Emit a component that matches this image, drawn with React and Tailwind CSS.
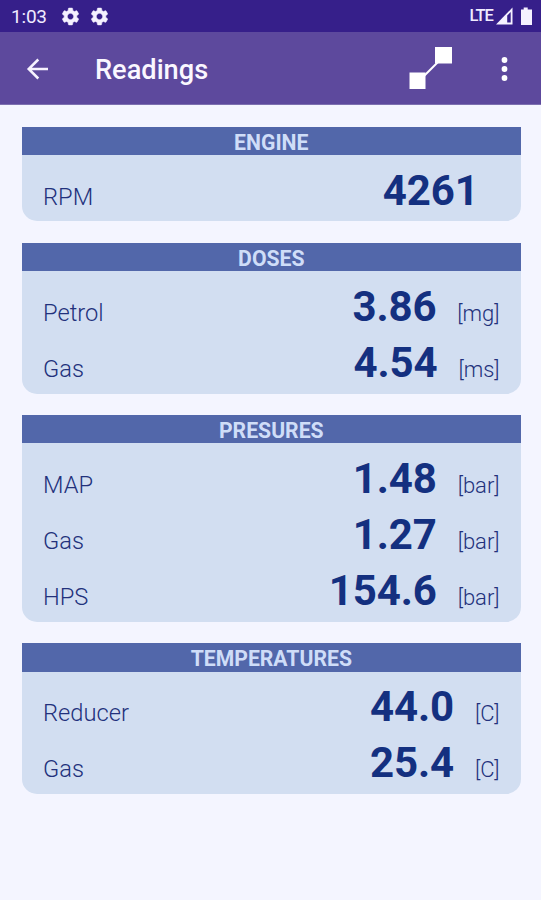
import React from "react";

const groups = [
  { title: "ENGINE", rows: [["RPM", "4261", ""]] },
  { title: "DOSES", rows: [["Petrol", "3.86", "[mg]"], ["Gas", "4.54", "[ms]"]] },
  { title: "PRESURES", rows: [["MAP", "1.48", "[bar]"], ["Gas", "1.27", "[bar]"], ["HPS", "154.6", "[bar]"]] },
  { title: "TEMPERATURES", rows: [["Reducer", "44.0", "[C]"], ["Gas", "25.4", "[C]"]] },
];

function Gear() {
  return (
    <svg className="size-[21px]" viewBox="0 0 24 24" fill="#f5f1ff" stroke="#f5f1ff" strokeWidth=".6">
      <path d="M19.14 12.94c.04-.3.06-.61.06-.94 0-.32-.02-.64-.07-.94l2.03-1.58a.49.49 0 0 0 .12-.61l-1.92-3.32a.488.488 0 0 0-.59-.22l-2.39.96c-.5-.38-1.03-.7-1.62-.94l-.36-2.54a.484.484 0 0 0-.48-.41h-3.84c-.24 0-.43.17-.47.41l-.36 2.54c-.59.24-1.13.57-1.62.94l-2.39-.96c-.22-.08-.47 0-.59.22L2.74 8.87c-.12.21-.08.47.12.61l2.03 1.58c-.05.3-.09.63-.09.94s.02.64.07.94l-2.03 1.58a.49.49 0 0 0-.12.61l1.92 3.32c.12.22.37.29.59.22l2.39-.96c.5.38 1.03.7 1.62.94l.36 2.54c.05.24.24.41.48.41h3.84c.24 0 .44-.17.47-.41l.36-2.54c.59-.24 1.13-.56 1.62-.94l2.39.96c.22.08.47 0 .59-.22l1.92-3.32c.12-.22.07-.47-.12-.61l-2.01-1.58zM12 15.6c-1.98 0-3.6-1.62-3.6-3.6s1.62-3.6 3.6-3.6 3.6 1.62 3.6 3.6-1.62 3.6-3.6 3.6z" />
    </svg>
  );
}

function Card({ title, rows }) {
  return (
    <section className="overflow-hidden rounded-b-[15px] bg-[#d2def1] pb-[9.8px]">
      <h2 className="h-[28.4px] bg-[#5267aa] text-center text-[21.2px] font-bold leading-[31px] text-[#cfddf8]">{title}</h2>
      {rows.map(([label, value, unit]) => (
        <div key={label} className="flex h-[56.3px] items-baseline px-[21px] pt-[10.5px] text-[#22317c]">
          <span className="flex-1 text-[23.7px] font-light leading-[27px]">{label}</span>
          <span className="mr-[21px] text-[42px] font-bold leading-[49px] tracking-[-0.15px] text-[#143080]">{value}</span>
          <span className="text-[22px] font-light leading-[27px]">{unit}</span>
        </div>
      ))}
    </section>
  );
}

export default function App() {
  return (
    <div className="flex h-[900px] w-full flex-col overflow-hidden bg-[#f4f5ff] font-['Roboto',sans-serif]">
      <div className="flex h-8 items-center bg-[#361f8a] pl-[11px] pr-[8px] text-[#f0ebff]">
        <span className="w-[49px] text-[19px] leading-8 tracking-[-0.2px] pt-[2px]">1:03</span>
        <span className="flex gap-[8px]"><Gear /><Gear /></span>
        <span className="ml-auto text-[16.5px] font-medium leading-8 tracking-[-0.9px]">LTE</span>
        <svg className="ml-[2px] h-[20px] w-[38px]" viewBox="0 0 38 20">
          <path d="M17.5 1.5v17H1z" fill="#f5f1ff" />
          <path d="M12.2 9.5 15.7 6v10.5h-3.5z" fill="#361f8a" />
          <path d="M28.7 1.5h4v2h4.3V19H26V3.500h2.700z" fill="#f5f1ff" />
        </svg>
      </div>
      <header className="flex h-[73px] items-center border-b border-[#7d70b0] bg-[#5d499d]">
        <svg className="ml-[26px] mt-[1px] h-[22px] w-[24px]" viewBox="0 0 24 22" fill="none" stroke="#f7f3ff" strokeWidth="2.5">
          <path d="M22 11H3M12.3 1.5 2.7 11l9.6 9.5" />
        </svg>
        <h1 className="ml-[45px] pt-[3px] text-[27.2px] font-medium leading-8 text-[#faf7ff]">Readings</h1>
        <svg className="ml-auto mt-[1px] h-[43px] w-[44px]" viewBox="0 0 44 43">
          <path d="M9 35 35 9" stroke="#fff" strokeWidth="2" />
          <path d="M.5 25.500h16v16.500H.5zM26 0h17v16.500H26z" fill="#fff" />
        </svg>
        <svg className="ml-[48px] mr-[33px] mt-[1px] h-[24px] w-[7px]" viewBox="0 0 7 24" fill="#fff">
          <circle cx="3.5" cy="3" r="2.9" /><circle cx="3.5" cy="12" r="2.9" /><circle cx="3.5" cy="21" r="2.9" />
        </svg>
      </header>
      <main className="flex flex-col gap-[21.3px] pl-[22px] pr-[20.4px] pt-[22px]">
        {groups.map((g) => <Card key={g.title} {...g} />)}
      </main>
    </div>
  );
}
